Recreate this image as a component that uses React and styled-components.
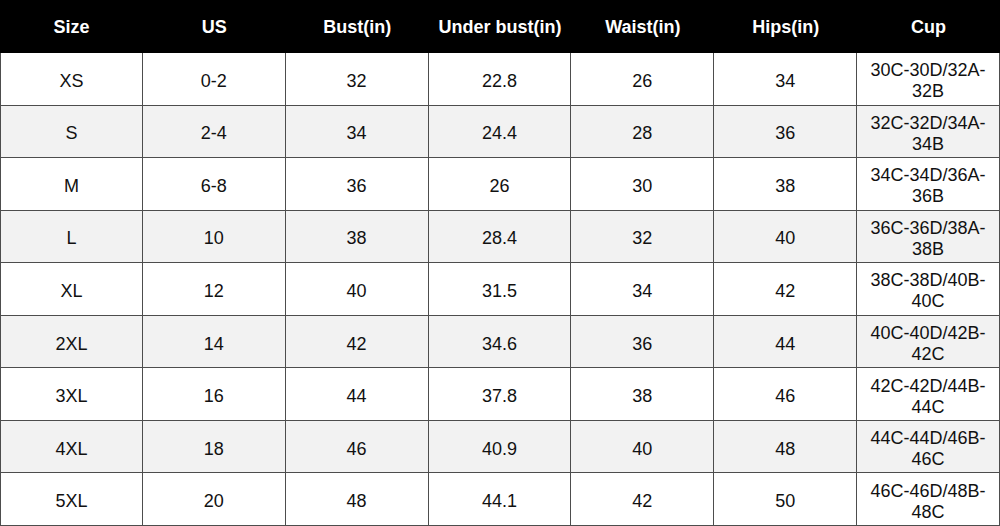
import React from 'react'
import styled, { createGlobalStyle } from 'styled-components'

const GlobalStyle = createGlobalStyle`
  html, body {
    margin: 0;
    padding: 0;
    background: #fff;
  }
  body {
    font-family: "Liberation Sans", Arial, sans-serif;
  }
`

const Chart = styled.div`
  width: 1000px;
  height: 526px;
  display: grid;
  grid-template-columns: repeat(7, 1fr);
  grid-template-rows: 53px repeat(9, 1fr);
  box-sizing: border-box;
`

const HeadCell = styled.div`
  background: #000;
  color: #fff;
  font-weight: bold;
  font-size: 18px;
  display: flex;
  align-items: center;
  justify-content: center;
  padding-top: 1px;
`

const Cell = styled.div`
  box-sizing: border-box;
  background: ${props => (props.$alt ? '#f2f2f2' : '#fff')};
  border-right: 1px solid #4d4d4d;
  border-bottom: 1px solid #4d4d4d;
  border-left: ${props => (props.$first ? '1px solid #4d4d4d' : 'none')};
  color: #111;
  font-size: 18px;
  line-height: 21px;
  display: flex;
  align-items: center;
  justify-content: center;
  text-align: center;
  padding: 5px 4px 0;
`

const headers = ['Size', 'US', 'Bust(in)', 'Under bust(in)', 'Waist(in)', 'Hips(in)', 'Cup']

const rows = [
  ['XS', '0-2', '32', '22.8', '26', '34', '30C-30D/32A-32B'],
  ['S', '2-4', '34', '24.4', '28', '36', '32C-32D/34A-34B'],
  ['M', '6-8', '36', '26', '30', '38', '34C-34D/36A-36B'],
  ['L', '10', '38', '28.4', '32', '40', '36C-36D/38A-38B'],
  ['XL', '12', '40', '31.5', '34', '42', '38C-38D/40B-40C'],
  ['2XL', '14', '42', '34.6', '36', '44', '40C-40D/42B-42C'],
  ['3XL', '16', '44', '37.8', '38', '46', '42C-42D/44B-44C'],
  ['4XL', '18', '46', '40.9', '40', '48', '44C-44D/46B-46C'],
  ['5XL', '20', '48', '44.1', '42', '50', '46C-46D/48B-48C'],
]

const App = () => {
  return (
    <>
      <GlobalStyle />
      <Chart>
        {headers.map(h => (
          <HeadCell key={h}>{h}</HeadCell>
        ))}
        {rows.map((row, i) =>
          row.map((value, j) => (
            <Cell key={i + '-' + j} $alt={i % 2 === 1} $first={j === 0}>
              {value}
            </Cell>
          ))
        )}
      </Chart>
    </>
  )
}

export default App
